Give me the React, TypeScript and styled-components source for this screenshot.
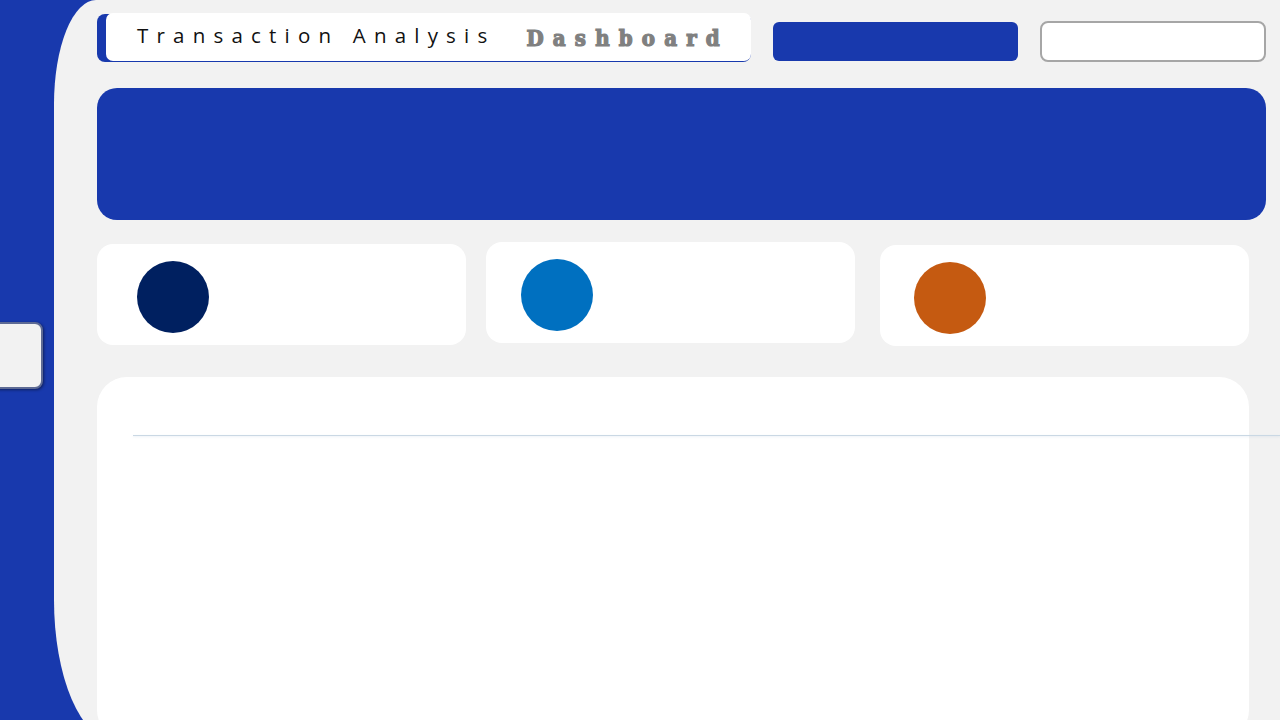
import React from "react";
import styled, { createGlobalStyle } from "styled-components";

const Global = createGlobalStyle`
  html, body { margin: 0; padding: 0; overflow: hidden; }
  body { background: #1839ad; font-family: "Open Sans", "Liberation Sans", sans-serif; }
  * { box-sizing: border-box; }
`;

const Page = styled.div`
  position: relative;
  width: 1280px;
  height: 720px;
  background: #1839ad;
  display: flex;
  overflow: hidden;
`;

const SideTab = styled.div`
  position: absolute;
  left: -10px;
  top: 322px;
  width: 53px;
  height: 67px;
  background: #f2f2f2;
  border: 2px solid #5d6a94;
  border-radius: 8px;
  box-shadow: 1px 1px 3px rgba(0, 0, 0, 0.45);
`;

const Main = styled.main`
  margin-left: 54px;
  flex: 1;
  height: 740px;
  background: #f2f2f2;
  border-radius: 42px 0 0 60px / 104px 0 0 140px;
  padding: 13px 15px 0 43px;
  display: flex;
  flex-direction: column;
`;

const Header = styled.header`
  display: flex;
  align-items: flex-start;
  gap: 22px;
`;

const TitleBox = styled.div`
  width: 654px;
  height: 48px;
  margin-top: 1px;
  background: #1839ad;
  border-radius: 8px;
  display: flex;
  padding-left: 9px;
`;

const TitleInner = styled.div`
  flex: 1;
  height: 48px;
  margin-top: -1px;
  background: #ffffff;
  border-radius: 7px;
  display: flex;
  align-items: center;
  padding-left: 31px;
  white-space: nowrap;
`;

const TitleMain = styled.span`
  font-family: "Open Sans", "Liberation Sans", sans-serif;
  font-size: 20.5px;
  letter-spacing: 8.2px;
  color: #111111;
  margin-top: -4px;
`;

const TitleAccent = styled.span`
  font-family: "DejaVu Serif", "Liberation Serif", serif;
  font-weight: 900;
  font-stretch: condensed;
  font-size: 22px;
  letter-spacing: 9.2px;
  color: #808080;
  -webkit-text-stroke: 1.2px #808080;
  margin-left: 31px;
  margin-top: 2px;
`;

const BlueButton = styled.div`
  width: 245px;
  height: 39px;
  margin-top: 9px;
  background: #1839ad;
  border-radius: 6px;
`;

const InputBox = styled.div`
  width: 226px;
  height: 41px;
  margin-top: 8px;
  background: #ffffff;
  border: 2px solid #a6a6a6;
  border-radius: 8px;
`;

const Banner = styled.section`
  margin-top: 26px;
  height: 132px;
  background: #1839ad;
  border-radius: 20px;
`;

const CardsRow = styled.div`
  display: flex;
  align-items: flex-start;
  margin-top: 22px;
  height: 103px;
  width: 1152px;
`;

const Card = styled.div<{ $shift: number; $gap: number; $inset: number }>`
  width: 369px;
  flex: none;
  margin-top: ${(p) => p.$shift}px;
  margin-left: ${(p) => p.$gap}px;
  height: 101px;
  background: #ffffff;
  border-radius: 16px;
  display: flex;
  align-items: center;
  padding-top: 4px;
  padding-left: ${(p) => p.$inset}px;
`;

const Dot = styled.div<{ $color: string }>`
  width: 72px;
  height: 72px;
  border-radius: 50%;
  background: ${(p) => p.$color};
`;

const ChartPanel = styled.section`
  margin-top: 32px;
  width: 1152px;
  flex: 1;
  background: #ffffff;
  border-radius: 30px;
  padding: 58px 0 0 36px;
`;

const Rule = styled.div`
  width: calc(100% + 31px);
  height: 1px;
  background: #cad8e4;
  box-shadow: 0 1px 2px rgba(180, 200, 220, 0.3);
`;

export default function App() {
  return (
    <Page>
      <Global />
      <Main>
        <Header>
          <TitleBox>
            <TitleInner>
              <TitleMain>Transaction Analysis</TitleMain>
              <TitleAccent>Dashboard</TitleAccent>
            </TitleInner>
          </TitleBox>
          <BlueButton />
          <InputBox />
        </Header>
        <Banner />
        <CardsRow>
          <Card $shift={2} $gap={0} $inset={40}>
            <Dot $color="#002060" />
          </Card>
          <Card $shift={0} $gap={20} $inset={35}>
            <Dot $color="#0070c0" />
          </Card>
          <Card $shift={3} $gap={25} $inset={34}>
            <Dot $color="#c55a11" />
          </Card>
        </CardsRow>
        <ChartPanel>
          <Rule />
        </ChartPanel>
      </Main>
      <SideTab />
    </Page>
  );
}
